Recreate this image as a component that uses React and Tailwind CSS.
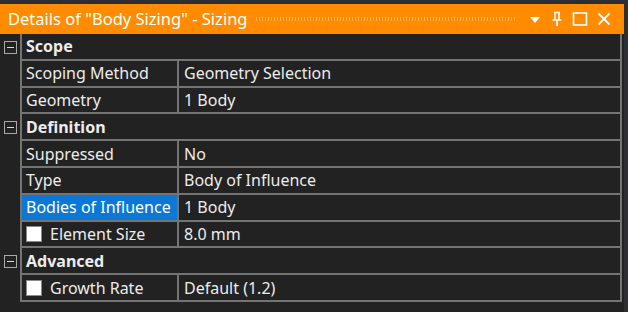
import React from "react";

const rows = [
  { type: "cat", label: "Scope" },
  { label: "Scoping Method", value: "Geometry Selection" },
  { label: "Geometry", value: "1 Body" },
  { type: "cat", label: "Definition" },
  { label: "Suppressed", value: "No" },
  { label: "Type", value: "Body of Influence" },
  { label: "Bodies of Influence", value: "1 Body", selected: true },
  { label: "Element Size", value: "8.0 mm", check: true },
  { type: "cat", label: "Advanced" },
  { label: "Growth Rate", value: "Default (1.2)", check: true },
];

function Minus() {
  return (
    <div className="w-[13px] h-[13px] border border-[#a8a8a8] flex items-center justify-center">
      <div className="w-[7px] h-[1px] bg-[#d8d8d8]" />
    </div>
  );
}

function Check() {
  return <div className="w-[16px] h-[16px] bg-white border border-[#8a8a8a] shrink-0" />;
}

export default function App() {
  return (
    <div className="w-[628px] h-[312px] bg-[#2b2e33] pt-[4px] pr-[4px] overflow-hidden" style={{ fontFamily: '"Noto Sans", "Open Sans", sans-serif' }}>
      {/* title bar */}
      <div className="h-[30px] bg-[#ff8c00] flex items-center pl-[8px] pr-[12px] text-white">
        <span className="text-[16.5px] whitespace-nowrap leading-none">Details of "Body Sizing" - Sizing</span>
        <div
          className="flex-1 h-[4px] ml-[8px] mr-[12px]"
          style={{ backgroundImage: "radial-gradient(circle, rgba(255,255,255,0.35) 0.6px, transparent 0.9px)", backgroundSize: "3px 2px" }}
        />
        <div className="flex items-center gap-[8px]">
          <svg width="14" height="14" viewBox="0 0 14 14"><path d="M2 5h10l-5 6z" fill="white" /></svg>
          <svg width="14" height="16" viewBox="0 0 14 16" fill="none" stroke="white" strokeWidth="1.6">
            <path d="M4 1.5h6M5 1.5v7M9 1.5v7M2.5 9h9M7 9v6" />
          </svg>
          <svg width="16" height="16" viewBox="0 0 16 16" fill="none" stroke="white" strokeWidth="1.6">
            <rect x="1.5" y="2" width="13" height="12" />
          </svg>
          <svg width="16" height="16" viewBox="0 0 16 16" fill="none" stroke="white" strokeWidth="1.8">
            <path d="M2.5 2.5l11 11M13.5 2.5l-11 11" />
          </svg>
        </div>
      </div>
      {/* grid */}
      <div className="h-[278px] bg-[#222222] flex flex-col text-[16px] text-[#ececec]">
        {rows.map((r, i) =>
          r.type === "cat" ? (
            <div key={i} className="h-[26.8px] flex shrink-0">
              <div className="w-[20px] flex items-center justify-center">
                <Minus />
              </div>
              <div className="flex-1 mr-[2px] border-l-2 border-b-2 border-r-2 border-[#747474] flex items-center pl-[4px] font-bold">
                {r.label}
              </div>
            </div>
          ) : (
            <div key={i} className="h-[26.8px] flex shrink-0">
              <div className="w-[20px]" />
              <div className="flex-1 mr-[2px] border-l-2 border-b-2 border-r-2 border-[#747474] flex">
                <div
                  className={`w-[157px] shrink-0 border-r-2 border-[#747474] flex items-center pl-[4px] gap-[8px] whitespace-nowrap overflow-hidden ${r.selected ? "bg-[#0a78d4] text-white" : ""}`}
                >
                  {r.check && <Check />}
                  {r.label}
                </div>
                <div className="flex-1 flex items-center pl-[5px] whitespace-nowrap">{r.value}</div>
              </div>
            </div>
          )
        )}
      </div>
    </div>
  );
}
